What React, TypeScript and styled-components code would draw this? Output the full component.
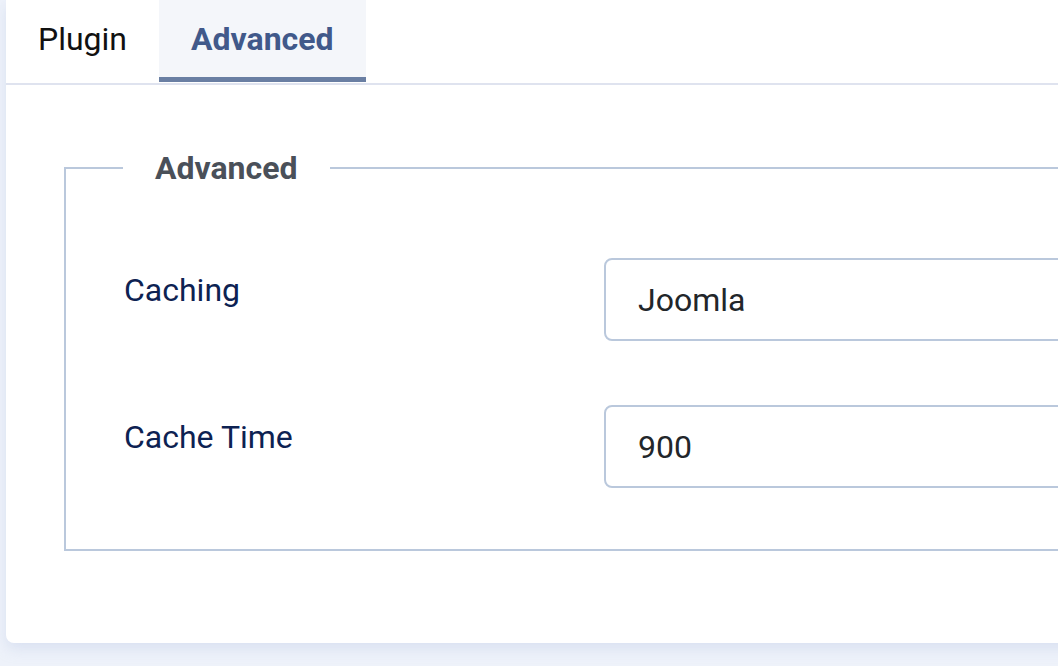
import React from "react";
import styled, { createGlobalStyle } from "styled-components";

const Global = createGlobalStyle`
  html, body { margin: 0; padding: 0; }
  body {
    background: #eef2fa;
    font-family: Roboto, "Liberation Sans", sans-serif;
    overflow: hidden;
    width: 1058px;
    height: 666px;
  }
`;

const Page = styled.div`
  padding: 0 0 0 6px;
  width: 1300px;
`;

const Card = styled.div`
  background: #fff;
  border-radius: 0 0 8px 8px;
  box-shadow: 0 6px 14px rgba(180, 195, 225, 0.35);
  height: 643px;
  display: flex;
  flex-direction: column;
`;

const TabList = styled.div`
  display: flex;
  height: 83px;
  border-bottom: 2px solid #dfe3ef;
`;

const Tab = styled.div<{ $active?: boolean }>`
  display: flex;
  align-items: center;
  padding: 0 32px 4px;
  font-size: 32px;
  font-weight: ${(p) => (p.$active ? 700 : 400)};
  color: ${(p) => (p.$active ? "#41598a" : "#111")};
  background: ${(p) => (p.$active ? "#f4f6fa" : "transparent")};
  box-shadow: ${(p) => (p.$active ? "inset 0 -5px 0 #6a7fa3" : "none")};
  margin-bottom: 1px;
`;

const Panel = styled.div`
  padding: 65px 0 0 58px;
`;

const Fieldset = styled.fieldset`
  margin: 0;
  border: 2px solid #bac8dc;
  padding: 72px 0 61px 58px;
`;

const Legend = styled.legend`
  margin-left: -1px;
  padding: 0 32px;
  font-size: 32px;
  line-height: 36px;
  font-weight: 700;
  color: #4a5059;
`;

const Row = styled.div`
  display: grid;
  grid-template-columns: 480px 1fr;
  align-items: start;
  & + & {
    margin-top: 64px;
  }
`;

const Label = styled.label`
  font-size: 32px;
  line-height: 42px;
  color: #0d2252;
  margin-top: 11px;
`;

const Input = styled.div`
  height: 83px;
  box-sizing: border-box;
  border: 2px solid #bac8dc;
  border-radius: 8px;
  padding: 0 32px;
  display: flex;
  align-items: center;
  font-size: 32px;
  color: #22262a;
`;

export default function App() {
  return (
    <>
      <Global />
      <Page>
        <Card>
          <TabList>
            <Tab>Plugin</Tab>
            <Tab $active>Advanced</Tab>
          </TabList>
          <Panel>
            <Fieldset>
              <Legend>Advanced</Legend>
              <Row>
                <Label>Caching</Label>
                <Input>Joomla</Input>
              </Row>
              <Row>
                <Label>Cache Time</Label>
                <Input>900</Input>
              </Row>
            </Fieldset>
          </Panel>
        </Card>
      </Page>
    </>
  );
}
